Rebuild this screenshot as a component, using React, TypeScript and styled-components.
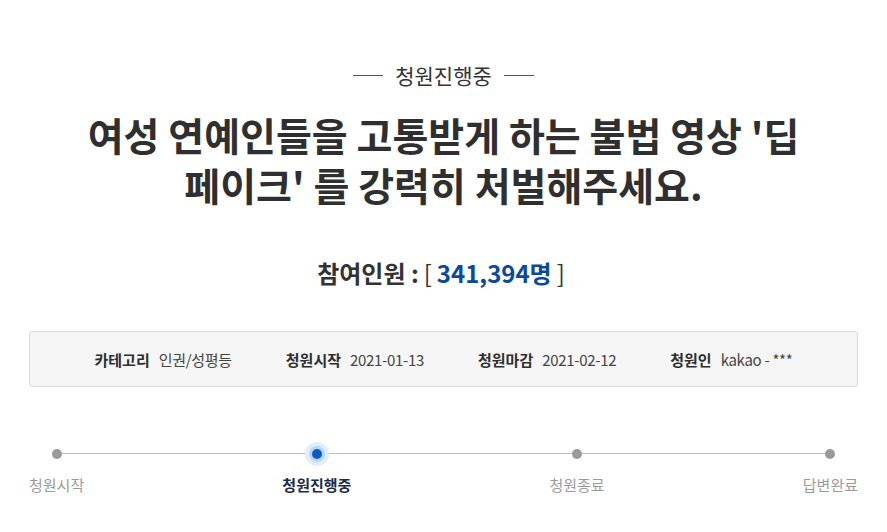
import styled, { createGlobalStyle } from "styled-components";

const GlobalStyle = createGlobalStyle`
  body {
    margin: 0;
    background: #ffffff;
    font-family: "Noto Sans CJK KR", "Noto Sans", sans-serif;
    color: #333333;
  }
`;

const Page = styled.main`
  width: 829px;
  margin: 0 auto;
  display: flex;
  flex-direction: column;
  align-items: stretch;
`;

const Status = styled.div`
  margin-top: 62px;
  display: flex;
  justify-content: center;
  align-items: center;
  gap: 12px;
  font-size: 21px;
  line-height: 26px;
  color: #333333;

  &::before,
  &::after {
    content: "";
    width: 30px;
    height: 1px;
    background: #555555;
  }
`;

const Title = styled.h1`
  margin: 21px 0 0;
  text-align: center;
  font-size: 39px;
  line-height: 50px;
  font-weight: 700;
  color: #2f2f2f;
`;

const Count = styled.div`
  margin-top: 49px;
  text-align: center;
  font-size: 24px;
  line-height: 30px;
  font-weight: 700;
  color: #333333;
`;

const Bracket = styled.span`
  font-weight: 400;
  margin: 0 5px;
`;

const Number = styled.span`
  color: #0b4a9b;
`;

const InfoBox = styled.section`
  margin-top: 43px;
  height: 56px;
  box-sizing: border-box;
  border: 1px solid #dcdcdc;
  border-radius: 3px;
  background: #f5f5f5;
  display: flex;
  justify-content: center;
  align-items: center;
  gap: 54px;
  font-size: 15px;
`;

const InfoItem = styled.div`
  display: flex;
  align-items: center;
  gap: 9px;
  white-space: nowrap;
`;

const InfoLabel = styled.span`
  font-weight: 700;
  color: #2f2f2f;
`;

const InfoValue = styled.span`
  color: #444444;
  letter-spacing: -0.3px;
`;

const Progress = styled.ol`
  list-style: none;
  margin: 55px 0 0;
  padding: 0;
  display: flex;
  justify-content: space-between;
  position: relative;

  &::before {
    content: "";
    position: absolute;
    left: 27px;
    right: 27px;
    top: 11px;
    height: 1px;
    background: #bdbdbd;
  }
`;

const Step = styled.li`
  display: flex;
  flex-direction: column;
  align-items: center;
  position: relative;
`;

const DotWrap = styled.div`
  height: 24px;
  display: flex;
  align-items: center;
  justify-content: center;
`;

const Dot = styled.span<{ $active?: boolean }>`
  width: 10px;
  height: 10px;
  border-radius: 50%;
  background: ${(p) => (p.$active ? "#0a5cc4" : "#9a9a9a")};
  box-shadow: ${(p) =>
    p.$active ? "0 0 0 3px #b9d6f6, 0 0 0 7px #e2eefb" : "none"};
`;

const StepLabel = styled.span<{ $active?: boolean }>`
  margin-top: 9px;
  font-size: 15px;
  line-height: 20px;
  white-space: nowrap;
  font-weight: ${(p) => (p.$active ? 700 : 400)};
  color: ${(p) => (p.$active ? "#1c2b4e" : "#9a9a9a")};
`;

const steps = [
  { label: "청원시작", active: false },
  { label: "청원진행중", active: true },
  { label: "청원종료", active: false },
  { label: "답변완료", active: false },
];

const info = [
  { label: "카테고리", value: "인권/성평등" },
  { label: "청원시작", value: "2021-01-13" },
  { label: "청원마감", value: "2021-02-12" },
  { label: "청원인", value: "kakao - ***" },
];

export default function App() {
  return (
    <>
      <GlobalStyle />
      <Page>
        <Status>청원진행중</Status>
        <Title>
          여성 연예인들을 고통받게 하는 불법 영상 '딥
          <br />
          페이크' 를 강력히 처벌해주세요.
        </Title>
        <Count>
          참여인원 :<Bracket>[</Bracket>
          <Number>341,394명</Number>
          <Bracket>]</Bracket>
        </Count>
        <InfoBox>
          {info.map((item) => (
            <InfoItem key={item.label}>
              <InfoLabel>{item.label}</InfoLabel>
              <InfoValue>{item.value}</InfoValue>
            </InfoItem>
          ))}
        </InfoBox>
        <Progress>
          {steps.map((s) => (
            <Step key={s.label}>
              <DotWrap>
                <Dot $active={s.active} />
              </DotWrap>
              <StepLabel $active={s.active}>{s.label}</StepLabel>
            </Step>
          ))}
        </Progress>
      </Page>
    </>
  );
}
